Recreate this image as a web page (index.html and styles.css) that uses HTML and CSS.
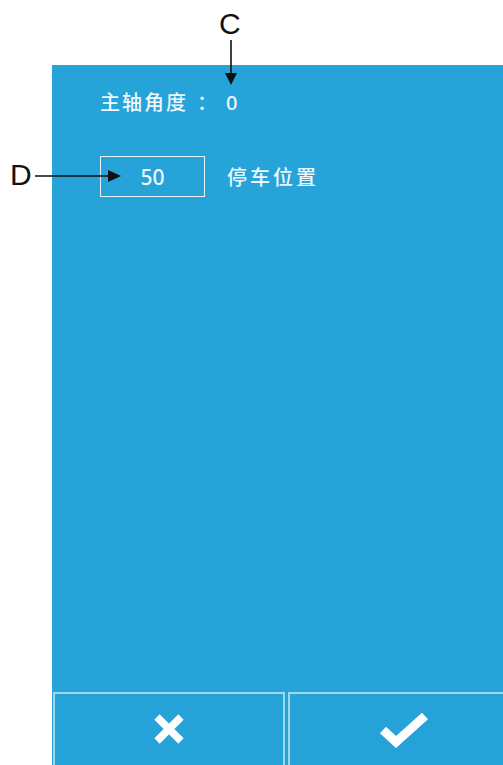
FILE: index.html
```html
<!DOCTYPE html>
<html lang="zh-CN">
<head>
    <meta charset="UTF-8">
    <meta name="viewport" content="width=device-width, initial-scale=1.0">
    <title>停车位置</title>
    <link rel="stylesheet" href="styles.css">
</head>
<body>
    <div class="page">
        <div class="panel">
            <div class="angle">
                <span>主轴角度</span><span class="colon">：</span><span class="angle-value">0</span>
            </div>
            <div class="setting">
                <div class="value-box">50</div>
                <span class="setting-label">停车位置</span>
            </div>
            <div class="buttons">
                <button class="btn">
                    <svg width="34" height="34" viewBox="0 0 34 34">
                        <path d="M5 5 L29 29 M29 5 L5 29" stroke="#fff" stroke-width="7.5" stroke-linecap="butt" fill="none"/>
                    </svg>
                </button>
                <button class="btn">
                    <svg width="50" height="38" viewBox="0 0 50 38">
                        <path d="M4 20 L17 32 L46 6" stroke="#fff" stroke-width="9" stroke-linejoin="miter" fill="none"/>
                    </svg>
                </button>
            </div>
        </div>

        <!-- callouts -->
        <span class="callout callout-c">C</span>
        <span class="callout callout-d">D</span>
        <svg class="arrows" width="503" height="200" viewBox="0 0 503 200">
            <line x1="231" y1="40" x2="231" y2="75" stroke="#111" stroke-width="1.6"/>
            <polygon points="225,73 237,73 231,85" fill="#111"/>
            <line x1="35" y1="176" x2="110" y2="176" stroke="#111" stroke-width="1.6"/>
            <polygon points="108,170 108,182 121,176" fill="#111"/>
        </svg>
    </div>
</body>
</html>
```

FILE: styles.css
```css
body {
    margin: 0;
    background: #fff;
    font-family: "Noto Sans", "Noto Sans CJK SC", sans-serif;
    overflow: hidden;
}
.page {
    position: relative;
    width: 503px;
    height: 765px;
    overflow: hidden;
}
.panel {
    margin: 65px 0 0 52px;
    height: 700px;
    width: 480px;
    background: #26a3d9;
    display: flex;
    flex-direction: column;
    padding-left: 48px;
    box-sizing: border-box;
    color: #eef7fb;
}
.angle {
    margin-top: 26px;
    font-size: 20px;
    line-height: 24px;
    font-weight: 500;
    letter-spacing: 2px;
    display: flex;
}
.colon {
    margin-left: 9px;
}
.angle-value {
    margin-left: 7px;
}
.setting {
    margin-top: 41px;
    display: flex;
    align-items: center;
}
.value-box {
    width: 105px;
    height: 41px;
    box-sizing: border-box;
    border: 1.5px solid #e6f4fa;
    display: flex;
    align-items: center;
    justify-content: center;
    font-size: 21px;
    font-weight: 500;
}
.setting-label {
    margin-left: 22px;
    font-size: 20px;
    font-weight: 500;
    letter-spacing: 3px;
}
.buttons {
    margin-top: auto;
    margin-left: -47px;
    height: 73px;
    display: flex;
    gap: 3px;
}
.btn {
    width: 232px;
    flex: none;
    height: 80px;
    background: #25a2d8;
    border: 2px solid #9bd9ee;
    border-bottom: none;
    padding: 0 0 8px 0;
    display: flex;
    align-items: center;
    justify-content: center;
}
.callout {
    position: absolute;
    font-family: "Liberation Sans", Arial, sans-serif;
    font-size: 30px;
    line-height: 30px;
    color: #111;
}
.callout-c {
    left: 219px;
    top: 9px;
}
.callout-d {
    left: 10px;
    top: 160px;
}
.arrows {
    position: absolute;
    left: 0;
    top: 0;
}
```
